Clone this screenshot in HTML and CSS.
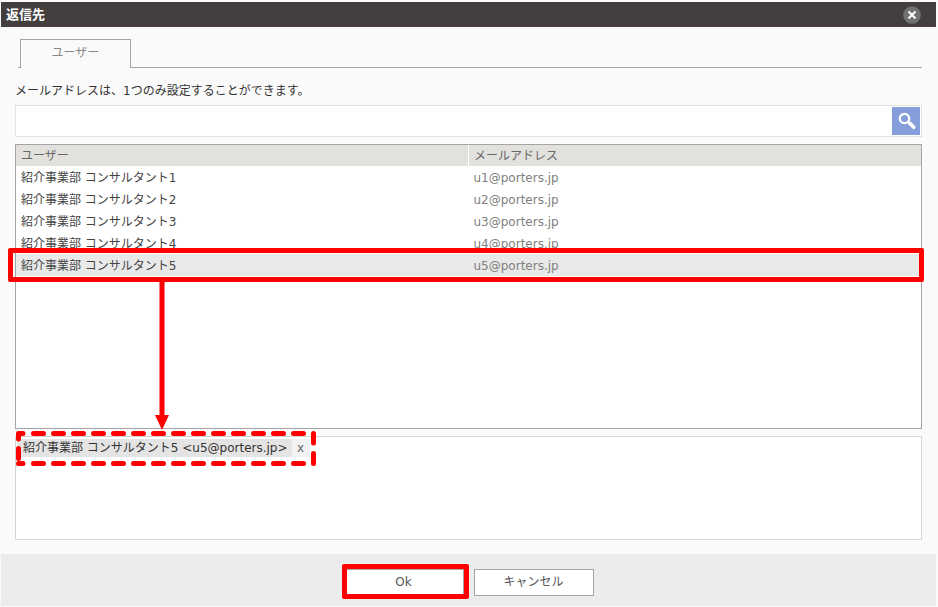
FILE: index.html
```html
<!DOCTYPE html>
<html lang="ja">
<head>
<meta charset="utf-8">
<title>返信先</title>
<link rel="stylesheet" href="styles.css">
</head>
<body>
<main class="dialog">
  <header class="titlebar">
    <h1>返信先</h1>
    <button class="close" type="button" aria-label="閉じる">
      <svg width="18" height="18" viewBox="0 0 18 18"><circle cx="9" cy="9" r="8.8" fill="#727272"/><path d="M5.500 5.500l7 7M12.500 5.500l-7 7" stroke="#fff" stroke-width="2"/></svg>
    </button>
  </header>
  <div class="content">
    <nav class="tabs"><button class="tab" type="button">ユーザー</button></nav>
    <label class="note" for="search">メールアドレスは、1つのみ設定することができます。</label>
    <form class="search">
      <input id="search" type="text">
      <button type="button" aria-label="検索">
        <svg width="28" height="28" viewBox="0 0 28 28" fill="none" stroke="#fff"><circle cx="12.5" cy="11.5" r="4.7" stroke-width="2.2"/><path d="M16 15l2 2" stroke-width="2.4"/><path d="M17.800 16.300l4 4" stroke-width="3.6" stroke-linecap="round"/></svg>
      </button>
    </form>
    <div class="list">
      <table>
        <thead><tr><th>ユーザー</th><th>メールアドレス</th></tr></thead>
        <tbody>
          <tr><td>紹介事業部 コンサルタント1</td><td>u1@porters.jp</td></tr>
          <tr><td>紹介事業部 コンサルタント2</td><td>u2@porters.jp</td></tr>
          <tr><td>紹介事業部 コンサルタント3</td><td>u3@porters.jp</td></tr>
          <tr><td>紹介事業部 コンサルタント4</td><td>u4@porters.jp</td></tr>
          <tr class="selected"><td>紹介事業部 コンサルタント5<svg class="arrow" width="14" height="149" viewBox="0 0 14 149" fill="#f00"><path d="M4.500 0h5v134h4.500l-7 15-7-15h4.500z"/></svg></td><td>u5@porters.jp</td></tr>
        </tbody>
      </table>
    </div>
    <div class="recipients">
      <div class="chip">
        <span>紹介事業部 コンサルタント5 &lt;u5@porters.jp&gt;</span><button type="button">x</button>
        <svg class="dashes" width="300" height="36" viewBox="0 0 300 36" fill="none" stroke="#f00" stroke-width="5" stroke-linecap="round" stroke-linejoin="round">
          <path d="M2.500 8V2.500H7M2.500 17.500v10M2.500 32.500H7M297.500 2.500v9.500M297.500 22.500v10"/>
          <path d="M17.500 2.500H288M17.500 32.500H288" stroke-dasharray="10 10"/>
        </svg>
      </div>
    </div>
  </div>
  <footer class="actions">
    <button class="ok" type="button">Ok</button>
    <button type="button">キャンセル</button>
  </footer>
</main>
</body>
</html>
```
FILE: styles.css
```css
* { box-sizing: border-box; }
body {
  margin: 0;
  background: #fafafa;
  color: #333;
  font: 12px/22px "DejaVu Sans", "Noto Sans CJK JP", sans-serif;
}
button, input { font: inherit; color: inherit; padding: 0; border: 0; margin: 0; }
svg { display: block; }
.dialog {
  display: flex;
  flex-direction: column;
  min-height: 100vh;
  padding: 2px 2px 1px 1px;
}
.titlebar {
  display: flex;
  align-items: center;
  justify-content: space-between;
  height: 25px;
  padding: 0 15px 0 5px;
  background: #443f3e;
  color: #fff;
}
.titlebar h1 { margin: 0; font-size: 13px; line-height: 22px; }
.close { background: none; }
.content {
  flex: 1;
  display: flex;
  flex-direction: column;
  padding: 12px 14px 14px;
}
.tabs {
  display: flex;
  height: 29px;
  margin-left: 3px;
  padding-left: 2px;
  border-bottom: 1px solid #a5a5a5;
}
.tab {
  width: 111px;
  height: 29px;
  padding-bottom: 2px;
  border: 1px solid #a5a5a5;
  border-bottom: 0;
  background: #fafafa;
  color: #888;
}
.note { margin: 12px 0 3px; }
.search {
  display: flex;
  align-items: center;
  height: 32px;
  padding: 1px;
  border: 1px solid #e2e2e2;
  background: #fff;
}
.search input { flex: 1; min-width: 0; padding: 0 5px; background: none; outline: 0; }
.search button { background: #869fdc; }
.list {
  flex: 1;
  margin: 7px 0;
  border: 1px solid #a5a5a5;
  background: #fff;
}
table { width: 100%; border-collapse: collapse; table-layout: fixed; }
th, td {
  height: 22px;
  padding: 2px 5px 0;
  line-height: 20px;
  text-align: left;
  font-weight: normal;
}
th { height: 21px; line-height: 19px; background: #e2e1dd; color: #666; }
th + th { border-left: 1px solid #fff; }
td { color: #444; }
td + td { color: #808080; }
.selected { position: relative; background: #e9e9e9; }
.selected td:first-child::after {
  content: "";
  position: absolute;
  inset: -6px -3px -6px -8px;
  border: 5px solid #f00;
  border-radius: 2px;
}
.arrow { position: absolute; top: 27px; left: 139px; }
.recipients {
  height: 104px;
  padding: 2px 1px;
  border: 1px solid #d5d5d5;
  background: #fff;
}
.chip { position: relative; display: flex; width: max-content; line-height: 18px; }
.chip span { padding: 0 4px 0 6px; background: #e4e4e4; }
.chip button { width: 18px; background: #f2f2f2; color: #666; }
.dashes { position: absolute; top: -8px; left: -1px; }
.actions {
  display: flex;
  justify-content: center;
  gap: 10px;
  padding: 15px 0 10px;
  background: #ececec;
}
.actions button {
  position: relative;
  width: 120px;
  height: 27px;
  padding-bottom: 1px;
  border: 1px solid #a5a5a5;
  background: #fff;
  color: #555;
}
.actions .ok::after {
  content: "";
  position: absolute;
  inset: -6px -6px -4px -3px;
  border: 5px solid #f00;
  border-radius: 2px;
}
```
